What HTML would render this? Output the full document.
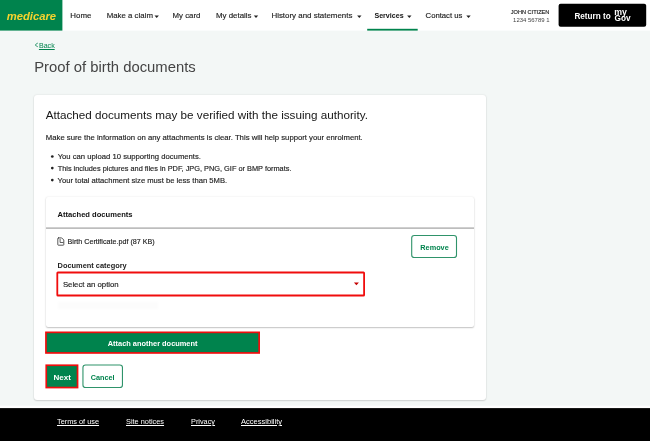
<!DOCTYPE html>
<html lang="en">
<head>
<meta charset="utf-8">
<title>Proof of birth documents</title>
<style>
*{box-sizing:border-box;margin:0;padding:0}
html,body{width:650px;height:441px;overflow:hidden}
body{background:#f3f7f6;font-family:"Liberation Sans",sans-serif;color:#222;position:relative}
.t{position:absolute;white-space:nowrap;line-height:0;height:0;display:block}
#hdr{position:absolute;left:0;top:0;width:650px;height:30px;background:#fff;box-shadow:0 .5px 0 rgba(255,255,255,.5)}
#logo{position:absolute;left:0;top:0;width:62px;height:30px;background:#00834d;box-shadow:.4px .4px 0 rgba(0,131,77,.45)}
.car{position:absolute;top:15.6px;width:0;height:0;border-left:2px solid transparent;border-right:2px solid transparent;border-top:2.2px solid #333}
#svcbar{position:absolute;left:367px;top:29px;width:51px;height:2px;background:#00834d}
#mygov{position:absolute;left:558.5px;top:4px;width:88px;height:23px;background:#000;border-radius:2px;box-shadow:0 -.5px 0 rgba(0,0,0,.5)}
#card{position:absolute;left:34px;top:95px;width:452px;height:305px;background:#fff;border-radius:3px;box-shadow:0 0 2px rgba(0,0,0,.13),0 1px 1.5px rgba(0,0,0,.13)}
.dot{position:absolute;left:50.6px;width:2.2px;height:2.2px;border-radius:50%;background:#222}
#inner{position:absolute;left:46px;top:197px;width:428px;height:130px;background:#fff;border-radius:2px;box-shadow:0 0 2px rgba(0,0,0,.10),0 1px 1.5px rgba(0,0,0,.22)}
#innerline{position:absolute;left:46px;top:226.5px;width:428px;height:2px;background:linear-gradient(#d8d8d8,#b4b4b4)}
#remove{position:absolute;left:411px;top:235px;width:46px;height:23px;border:1px solid #3a9972;border-radius:3px;background:#fff}
#select{position:absolute;left:56px;top:272px;width:309px;height:24px;border:2px solid #ee1111;border-radius:1px;background:#fff}
#selcar{position:absolute;left:354px;top:282.6px;width:0;height:0;border-left:2.4px solid transparent;border-right:2.4px solid transparent;border-top:2.6px solid #c40000}
#selshadow{position:absolute;left:58px;top:302px;width:100px;height:7px;background:rgba(0,0,0,.012);filter:blur(1.5px)}
#attach{position:absolute;left:45px;top:332px;width:215px;height:22px;background:#00834d;border:2px solid #ee1111}
#next{position:absolute;left:45px;top:364.5px;width:33px;height:24px;background:#00834d;border:2px solid #ee1111}
#cancel{position:absolute;left:82px;top:364.5px;width:41px;height:24px;background:#fff;border:1px solid #3a9972;border-radius:3px}
#txt{position:absolute;left:0;top:0;width:650px;height:441px;will-change:transform}
#ftr{position:absolute;left:0;top:408px;width:650px;height:33px;background:#000}
</style>
</head>
<body>
<div id="card"></div>
<div id="inner"></div>
<div id="innerline"></div>
<div id="selshadow"></div>
<svg id="shapes" width="650" height="441" viewBox="0 0 650 441" style="position:absolute;left:0;top:0">
  <rect x="0" y="0" width="650" height="30.6" fill="#fff"/>
  <rect x="0" y="0" width="62.4" height="30.6" fill="#00834d"/>
  <rect x="367.2" y="28.8" width="50.5" height="1.8" fill="#00834d"/>
  <g fill="#222">
    <path d="M154.5 15.6h4.4l-2.2 2.4z"/>
    <path d="M253.8 15.6h4.4l-2.2 2.4z"/>
    <path d="M357.1 15.6h4.4l-2.2 2.4z"/>
    <path d="M407.1 15.6h4.4l-2.2 2.4z"/>
    <path d="M466.3 15.6h4.4l-2.2 2.4z"/>
  </g>
  <rect x="558.6" y="3.7" width="87.6" height="23.1" rx="2" fill="#000"/>
  <g fill="#222">
    <circle cx="52.3" cy="156.5" r="1.35"/>
    <circle cx="52.3" cy="168.1" r="1.35"/>
    <circle cx="52.3" cy="180.1" r="1.35"/>
  </g>
  <g fill="none" stroke="#3a3a3a" stroke-linejoin="round" stroke-linecap="round">
    <path d="M58.4 237.9h3.3l2.1 2.1v4.6a.6.6 0 0 1-.6.6h-4.8a.6.6 0 0 1-.6-.6v-6.1a.6.6 0 0 1 .6-.6z" stroke-width="0.85"/>
    <path d="M60.1 239.3v3.2h2.9" stroke-width="0.8"/>
  </g>
  <rect x="411.7" y="235.5" width="44.8" height="22" rx="2.6" fill="#fff" stroke="#2f936a" stroke-width="1.1"/>
  <rect x="57.3" y="272.5" width="306.8" height="23" rx="0.6" fill="#fff" stroke="#f00d0d" stroke-width="1.8"/>
  <path d="M353.9 282.6h5l-2.5 2.6z" fill="#c40000"/>
  <rect x="45.95" y="332.35" width="213.2" height="20.6" fill="#00834d" stroke="#f00d0d" stroke-width="1.7"/>
  <rect x="46.25" y="365.25" width="31.3" height="22.3" fill="#00834d" stroke="#f00d0d" stroke-width="1.7"/>
  <rect x="82.95" y="364.95" width="39.5" height="22.6" rx="2.6" fill="#fff" stroke="#2f936a" stroke-width="1.1"/>
  <rect x="0" y="405.7" width="650" height="3" fill="#fff"/>
  <rect x="0" y="408.1" width="650" height="33" fill="#000"/>
</svg>
<div id="txt">
<span id="t_logo" class="t" style="left:6.63px;top:15.59px;font-size:11.27px;letter-spacing:0.00px;font-weight:bold;font-style:italic;color:#f5d32f">medicare</span>
<span id="t_home" class="t" style="left:70.35px;top:16.45px;font-size:7.88px;letter-spacing:0.00px;color:#222;-webkit-text-stroke:.15px #222">Home</span>
<span id="t_claim" class="t" style="left:106.72px;top:16.38px;font-size:7.85px;letter-spacing:0.00px;color:#222;-webkit-text-stroke:.15px #222">Make a claim</span>
<span id="t_card" class="t" style="left:172.57px;top:16.42px;font-size:7.82px;letter-spacing:0.00px;color:#222;-webkit-text-stroke:.15px #222">My card</span>
<span id="t_det" class="t" style="left:216.01px;top:16.43px;font-size:7.90px;letter-spacing:0.00px;color:#222;-webkit-text-stroke:.15px #222">My details</span>
<span id="t_hist" class="t" style="left:271.42px;top:16.42px;font-size:7.93px;letter-spacing:0.00px;color:#222;-webkit-text-stroke:.15px #222">History and statements</span>
<span id="t_svc" class="t" style="left:374.45px;top:16.41px;font-size:7.09px;letter-spacing:0.00px;color:#111;font-weight:bold">Services</span>
<span id="t_con" class="t" style="left:425.57px;top:16.40px;font-size:7.71px;letter-spacing:0.00px;color:#222;-webkit-text-stroke:.15px #222">Contact us</span>
<span id="t_u1" class="t" style="left:510.74px;top:11.99px;font-size:5.62px;letter-spacing:0.00px;color:#222;-webkit-text-stroke:.15px #222">JOHN CITIZEN</span>
<span id="t_u2" class="t" style="left:513.09px;top:19.84px;font-size:5.96px;letter-spacing:0.00px;color:#444">1234 56789 1</span>
<span id="t_ret" class="t" style="left:574.41px;top:17.03px;font-size:8.17px;letter-spacing:0.00px;color:#fff;font-weight:bold">Return to</span>
<span id="t_my" class="t" style="left:614.28px;top:11.84px;font-size:8.77px;letter-spacing:0.00px;color:#fff;font-weight:bold">my</span>
<span id="t_gov" class="t" style="left:614.62px;top:18.58px;font-size:8.26px;letter-spacing:0.00px;color:#fff;font-weight:bold">Gov</span>
<span id="t_lt" class="t" style="left:34.50px;top:45.21px;font-size:9.50px;letter-spacing:0.00px;color:#00834d;transform:scaleX(.55);transform-origin:0 0">&lt;</span>
<span id="t_back" class="t" style="left:38.91px;top:46.21px;font-size:7.10px;letter-spacing:0.00px;color:#00834d;text-decoration:underline;text-decoration-thickness:.7px;text-underline-offset:.6px">Back</span>
<span id="t_title" class="t" style="left:34.18px;top:66.99px;font-size:14.83px;letter-spacing:0.00px;color:#444">Proof of birth documents</span>
<span id="t_h2" class="t" style="left:45.68px;top:114.60px;font-size:11.68px;letter-spacing:0.00px;color:#161616">Attached documents may be verified with the issuing authority.</span>
<span id="t_p" class="t" style="left:45.85px;top:137.61px;font-size:7.73px;letter-spacing:0.00px;color:#222;-webkit-text-stroke:.15px #222">Make sure the information on any attachments is clear. This will help support your enrolment.</span>
<span id="t_b1" class="t" style="left:57.64px;top:157.01px;font-size:7.69px;letter-spacing:0.00px;color:#222;-webkit-text-stroke:.15px #222">You can upload 10 supporting documents.</span>
<span id="t_b2" class="t" style="left:57.66px;top:168.59px;font-size:7.37px;letter-spacing:0.00px;color:#222;-webkit-text-stroke:.15px #222">This includes pictures and files in PDF, JPG, PNG, GIF or BMP formats.</span>
<span id="t_b3" class="t" style="left:57.51px;top:180.62px;font-size:7.65px;letter-spacing:0.00px;color:#222;-webkit-text-stroke:.15px #222">Your total attachment size must be less than 5MB.</span>
<span id="t_att" class="t" style="left:57.59px;top:215.00px;font-size:7.58px;letter-spacing:0.00px;color:#111;font-weight:bold">Attached documents</span>
<span id="t_file" class="t" style="left:67.56px;top:242.00px;font-size:7.16px;letter-spacing:0.00px;color:#222;-webkit-text-stroke:.15px #222">Birth Certificate.pdf (87 KB)</span>
<span id="t_rem" class="t" style="left:420.37px;top:247.62px;font-size:7.29px;letter-spacing:0.00px;color:#00834d;font-weight:bold">Remove</span>
<span id="t_cat" class="t" style="left:57.56px;top:265.60px;font-size:7.41px;letter-spacing:0.00px;color:#222;font-weight:bold">Document category</span>
<span id="t_sel" class="t" style="left:62.88px;top:284.97px;font-size:7.79px;letter-spacing:0.00px;color:#222;-webkit-text-stroke:.15px #222">Select an option</span>
<span id="t_attach" class="t" style="left:107.77px;top:344.01px;font-size:7.42px;letter-spacing:0.00px;color:#fff;font-weight:bold">Attach another document</span>
<span id="t_next" class="t" style="left:53.43px;top:377.67px;font-size:8.04px;letter-spacing:0.00px;color:#fff;font-weight:bold">Next</span>
<span id="t_cancel" class="t" style="left:90.78px;top:377.60px;font-size:7.25px;letter-spacing:0.00px;color:#00834d;font-weight:bold">Cancel</span>
<span id="t_f1" class="t" style="left:57.00px;top:422.00px;font-size:7.35px;letter-spacing:0.00px;color:#fff;text-decoration:underline;text-decoration-thickness:.7px;text-underline-offset:.6px">Terms of use</span>
<span id="t_f2" class="t" style="left:126.00px;top:422.01px;font-size:7.36px;letter-spacing:0.00px;color:#fff;text-decoration:underline;text-decoration-thickness:.7px;text-underline-offset:.6px">Site notices</span>
<span id="t_f3" class="t" style="left:191.00px;top:422.01px;font-size:7.33px;letter-spacing:0.00px;color:#fff;text-decoration:underline;text-decoration-thickness:.7px;text-underline-offset:.6px">Privacy</span>
<span id="t_f4" class="t" style="left:241.00px;top:422.01px;font-size:7.54px;letter-spacing:0.00px;color:#fff;text-decoration:underline;text-decoration-thickness:.7px;text-underline-offset:.6px">Accessibility</span>
</div>
</body>
</html>
